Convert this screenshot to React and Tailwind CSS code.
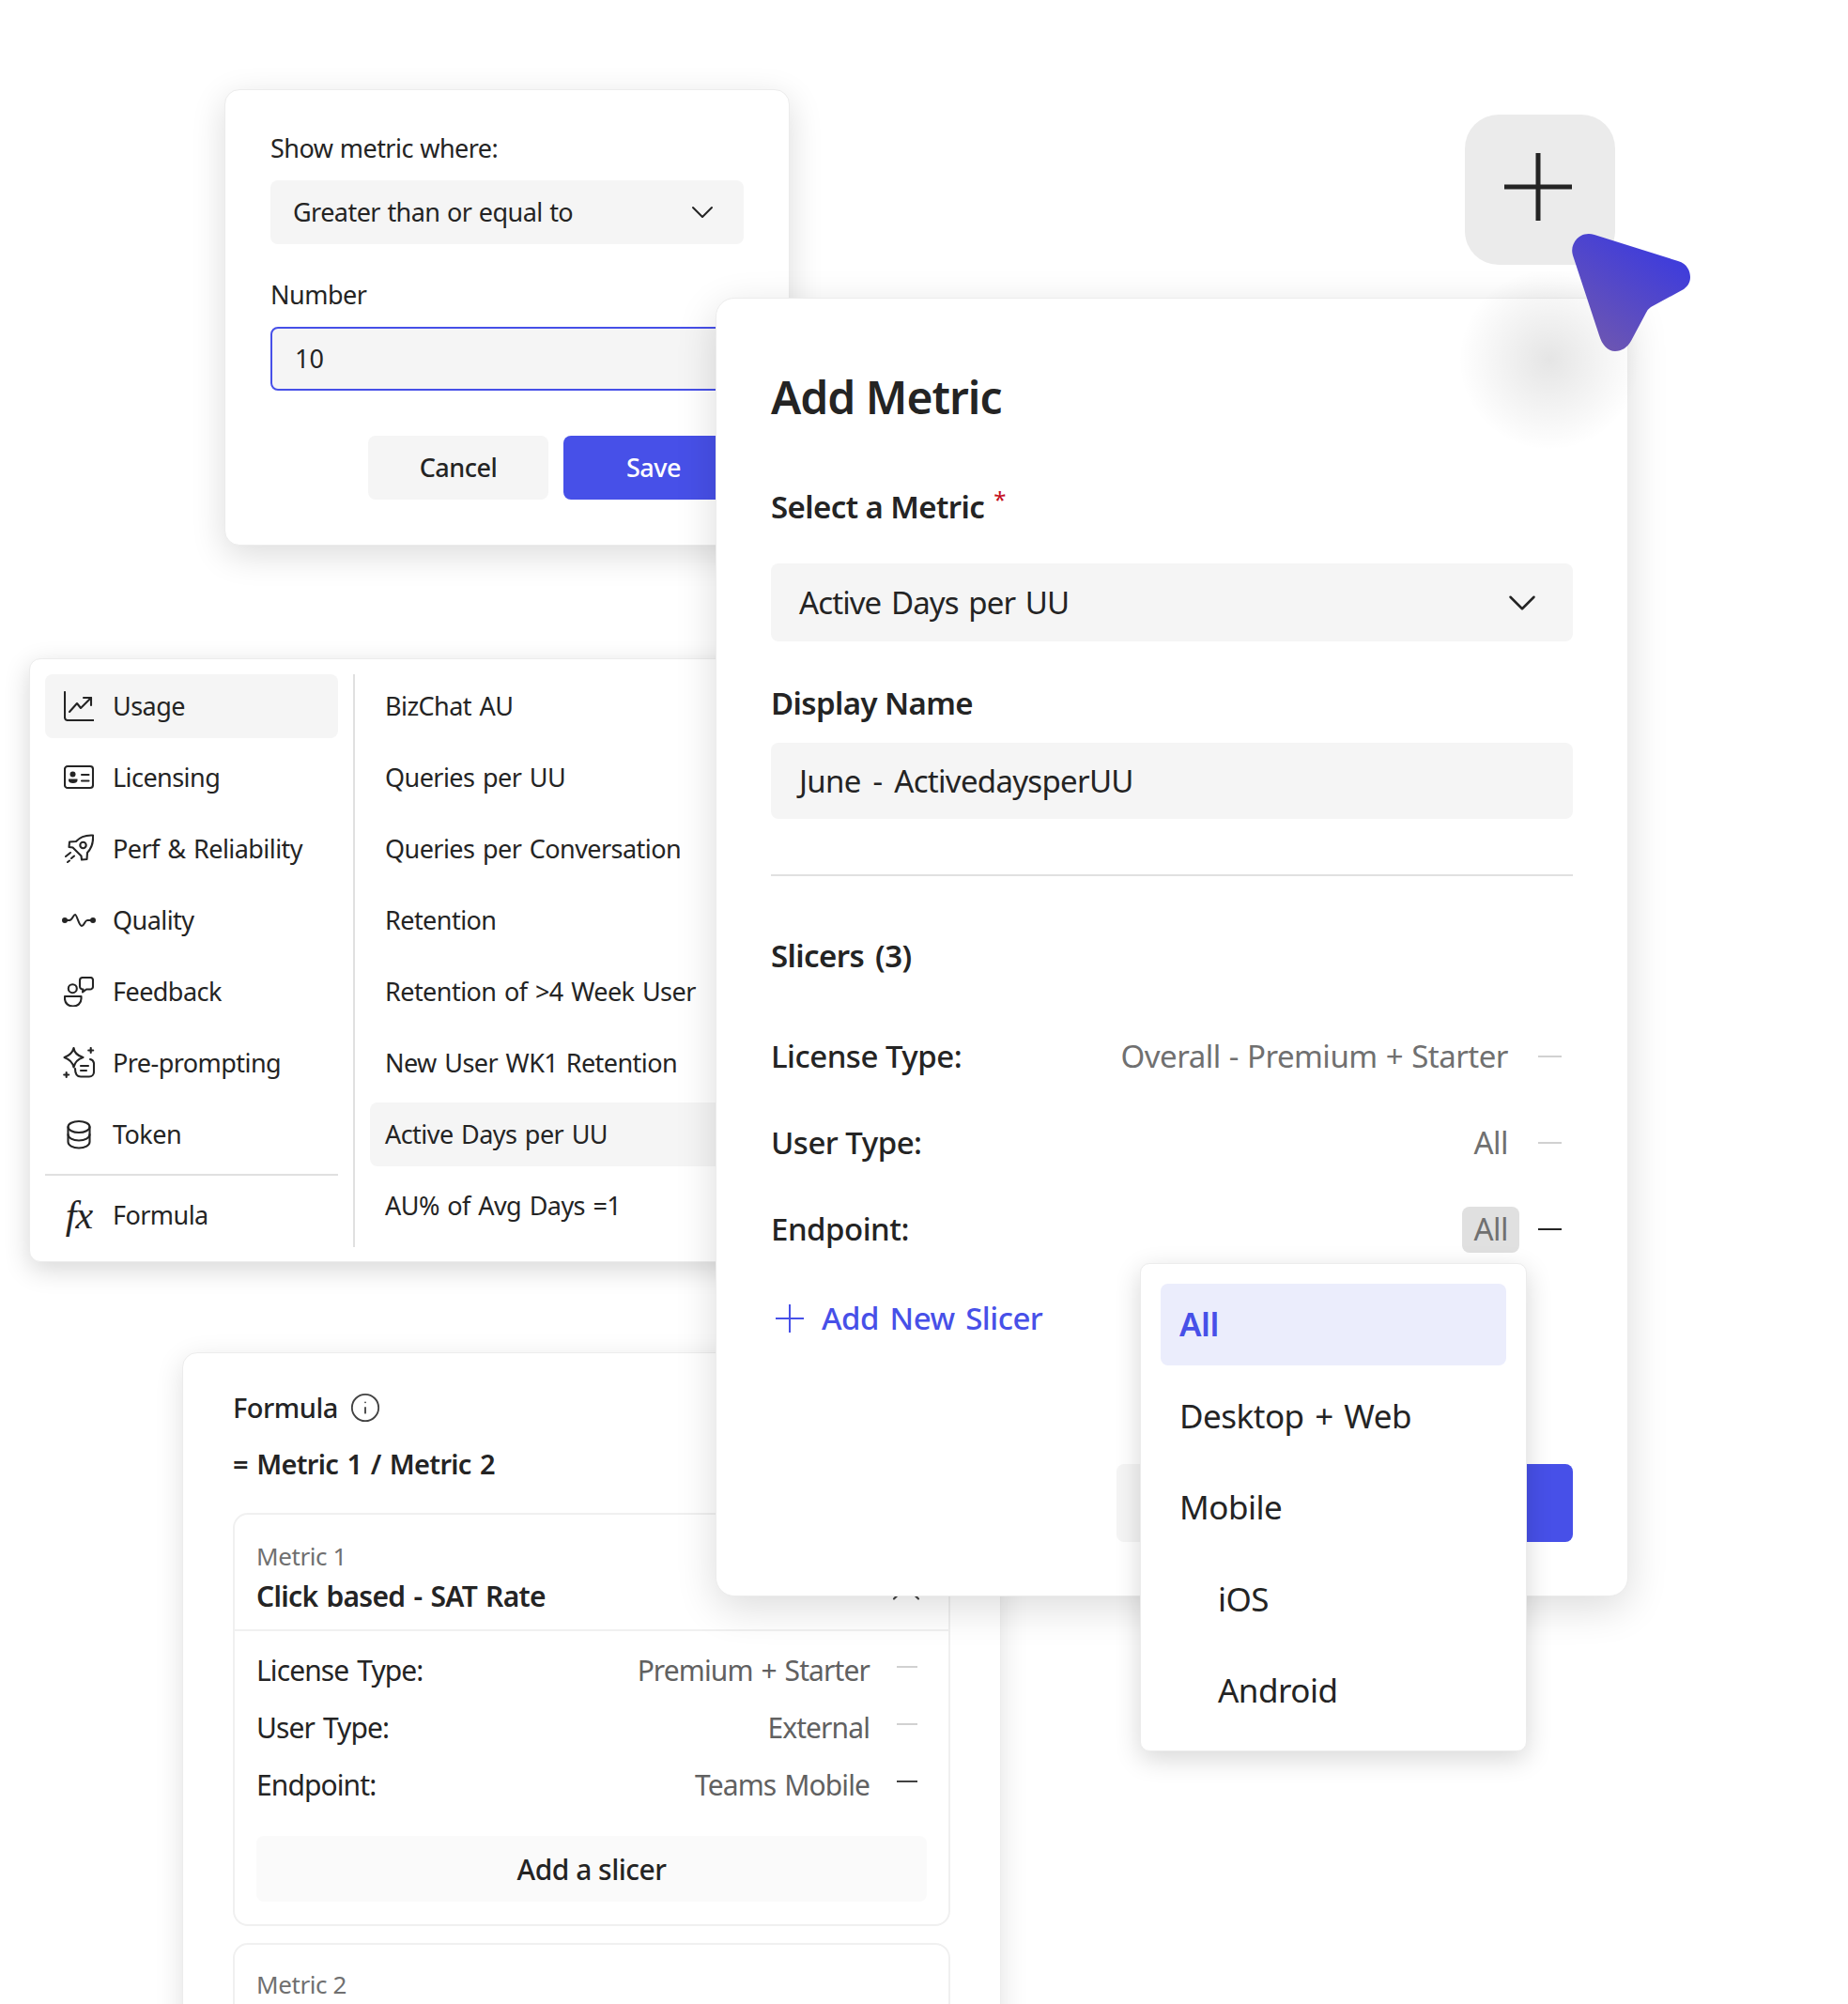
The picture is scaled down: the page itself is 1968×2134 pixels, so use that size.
import { ChevronDown, ChevronUp, Info } from 'lucide-react';

const font = "font-['Noto_Sans',sans-serif]";

const IconUsage = () => (
  <svg width="32" height="32" viewBox="0 0 32 32" fill="none" stroke="#242424" strokeWidth="2.1" strokeLinecap="round" strokeLinejoin="round">
    <path d="M1 1v27a3 3 0 0 0 3 3h28" />
    <path d="M6 22l8-9 4 5 11-11" />
    <path d="M21 7h8v8" />
  </svg>
);

const IconLicensing = () => (
  <svg width="32" height="32" viewBox="0 0 32 32" fill="none" stroke="#242424" strokeWidth="2.1" strokeLinecap="round">
    <rect x="1" y="4" width="30" height="23" rx="3" />
    <circle cx="9.5" cy="12.500" r="3" fill="#242424" stroke="none" />
    <path d="M5 17.500h9.500v1.500c0 2-2 3-4.750 3S5 21 5 19z" fill="#242424" stroke="none" />
    <path d="M19 13h7.500M19 19.500h7.500" />
  </svg>
);

const IconRocket = () => (
  <svg width="32" height="32" viewBox="0 0 32 32" fill="none" stroke="#242424" strokeWidth="2.1" strokeLinecap="round" strokeLinejoin="round">
    <path d="M31 1.500c-8-.5-14 2-18 6.500l-7 .5-.5 5.500 4 .5 9 9 .5 4 5.500-.5.5-7c4-4 6.500-10 6-18z" />
    <circle cx="20.500" cy="12" r="3.200" />
    <path d="M2 24l5-4M4 30l2-1.500M8 26l3-2.500" />
  </svg>
);

const IconQuality = () => (
  <svg width="36" height="32" viewBox="0 0 36 32" fill="none" stroke="#242424" strokeWidth="2" strokeLinecap="round" strokeLinejoin="round">
    <circle cx="3" cy="16" r="2" fill="#242424" />
    <circle cx="33" cy="16" r="2" fill="#242424" />
    <path d="M3 16h5c3 0 4-6 6-6s4 12 7 12 3-6 6-6h6" />
  </svg>
);

const IconFeedback = () => (
  <svg width="32" height="32" viewBox="0 0 32 32" fill="none" stroke="#242424" strokeWidth="2.1" strokeLinecap="round" strokeLinejoin="round">
    <circle cx="9.300" cy="12.700" r="4.500" />
    <path d="M1 21h17.500v2.500c0 5-4 8-8.750 8S1 28.500 1 23.500z" />
    <path d="M20 1h8.500a2.500 2.500 0 0 1 2.500 2.500v7a3 3 0 0 1-3 3h-4l-4 3 .5-3a3 3 0 0 1-3.500-3V4a3 3 0 0 1 3-3z" />
  </svg>
);

const IconPrePrompt = () => (
  <svg width="34" height="34" viewBox="0 0 34 34" fill="none" stroke="#242424" strokeWidth="2.1" strokeLinecap="round" strokeLinejoin="round">
    <path d="M11.500 1C12 5 15 9 21.500 11 15 13 12.500 17 11.500 21.500 10.500 17 7 13 1.500 11 7 9 10.500 5 11.500 1z" />
    <path d="M29.700 1v5M27.200 3.500h5M3.700 27v5M1.200 29.500h5" />
    <path d="M13 23c0 5 2 8.500 6 8.500h9a5 5 0 0 0 5-5V17a5 5 0 0 0-4-4" />
    <path d="M19 20h8M19 25h6" />
  </svg>
);

const IconToken = () => (
  <svg width="32" height="32" viewBox="0 0 32 32" fill="none" stroke="#242424" strokeWidth="2.1" strokeLinecap="round">
    <ellipse cx="16" cy="8" rx="11.500" ry="6" />
    <path d="M4.500 8v16c0 3.500 5 6.500 11.500 6.500s11.500-3 11.500-6.500V8" />
    <path d="M4.500 16c0 3.500 5 6.500 11.500 6.500s11.500-3 11.500-6.500" />
  </svg>
);

const IconFx = () => (
  <span className="font-['Liberation_Serif',serif] italic text-[42px] leading-none tracking-[-1px] text-[#242424]">fx</span>
);

const categories = [
  { label: 'Usage', icon: <IconUsage />, active: true },
  { label: 'Licensing', icon: <IconLicensing /> },
  { label: 'Perf & Reliability', icon: <IconRocket /> },
  { label: 'Quality', icon: <IconQuality /> },
  { label: 'Feedback', icon: <IconFeedback /> },
  { label: 'Pre-prompting', icon: <IconPrePrompt /> },
  { label: 'Token', icon: <IconToken /> },
];

const metrics = [
  'BizChat AU',
  'Queries per UU',
  'Queries per Conversation',
  'Retention',
  'Retention of >4 Week User',
  'New User WK1 Retention',
  'Active Days per UU',
  'AU% of Avg Days =1',
];

function CategoryRow({ label, icon, active }) {
  return (
    <div className={`h-[68px] rounded-lg flex items-center ${active ? 'bg-[#f5f5f5]' : ''}`}>
      <div className="w-[72px] flex justify-center shrink-0">{icon}</div>
      <span className="text-[27px] tracking-[-0.55px] [word-spacing:2px] text-[#242424]">{label}</span>
    </div>
  );
}

function ThresholdCard() {
  return (
    <div className="absolute left-[239px] top-[95px] w-[602px] h-[486px] bg-white rounded-[16px] border border-[#ececec] shadow-[0_10px_36px_rgba(0,0,0,0.14)] px-[48px] pt-[46px]">
      <div className="h-[32px] flex items-center text-[27px] tracking-[-0.55px] [word-spacing:1px] text-[#242424]">Show metric where:</div>
      <div className="mt-[18px] h-[68px] rounded-lg bg-[#f5f5f5] flex items-center justify-between px-[24px] text-[27px] tracking-[-0.55px] [word-spacing:1px] text-[#242424]">
        <span>Greater than or equal to</span>
        <ChevronDown size={40} strokeWidth={1.2} className="text-[#242424]" />
      </div>
      <div className="mt-[38px] h-[32px] flex items-center text-[27px] tracking-[-0.5px] text-[#242424]">Number</div>
      <div className="mt-[18px] h-[68px] rounded-lg bg-[#f5f5f5] border-2 border-[#4750e8] flex items-center px-[24px] text-[27px] text-[#242424]">10</div>
      <div className="mt-[48px] flex justify-end gap-[16px]">
        <div className="w-[192px] h-[68px] rounded-lg bg-[#f5f5f5] flex items-center justify-center text-[27px] tracking-[-0.5px] font-medium text-[#242424]">Cancel</div>
        <div className="w-[192px] h-[68px] rounded-lg bg-[#4750e8] flex items-center justify-center text-[27px] tracking-[-0.5px] font-medium text-white">Save</div>
      </div>
    </div>
  );
}

function MetricMenu() {
  return (
    <div className="absolute left-[31px] top-[701px] w-[800px] h-[643px] bg-white rounded-[12px] border border-[#ececec] shadow-[0_8px_28px_rgba(0,0,0,0.16)] flex pl-[16px] pt-[16px]">
      <div className="w-[312px] shrink-0">
        <div className="flex flex-col gap-[8px]">
          {categories.map((c) => (
            <CategoryRow key={c.label} {...c} />
          ))}
        </div>
        <div className="mt-[8px] h-[2px] bg-[#e0e0e0]" />
        <div className="mt-[8px]">
          <CategoryRow label="Formula" icon={<IconFx />} />
        </div>
      </div>
      <div className="ml-[16px] w-[2px] h-[610px] bg-[#e0e0e0] shrink-0" />
      <div className="ml-[16px] flex-1 flex flex-col gap-[8px]">
        {metrics.map((m) => (
          <div key={m} className={`h-[68px] rounded-lg flex items-center pl-[16px] text-[27px] tracking-[-0.55px] [word-spacing:2px] text-[#242424] ${m === 'Active Days per UU' ? 'bg-[#f5f5f5]' : ''}`}>
            {m}
          </div>
        ))}
      </div>
    </div>
  );
}

function FormulaSlicer({ label, value, dash }) {
  return (
    <div className="h-[40px] flex items-center justify-between text-[30px] tracking-[-0.9px] [word-spacing:2px]">
      <span className="text-[#242424]">{label}</span>
      <div className="flex items-center">
        <span className="text-[#616161]">{value}</span>
        <div className={`ml-[29px] mr-[10px] -mt-[6px] w-[22px] h-[2px] ${dash}`} />
      </div>
    </div>
  );
}

function FormulaCard() {
  return (
    <div className="absolute left-[194px] top-[1440px] w-[872px] h-[800px] bg-white rounded-[16px] border border-[#ececec] shadow-[0_8px_30px_rgba(0,0,0,0.12)] px-[53px] pt-[38px]">
      <div className="h-[40px] flex items-center gap-[12px] text-[29px] tracking-[-0.5px] font-medium text-[#242424]">
        <span>Formula</span>
        <Info size={34} strokeWidth={1.3} className="text-[#424242]" />
      </div>
      <div className="mt-[20px] h-[40px] flex items-center text-[29px] tracking-[-0.7px] [word-spacing:2.5px] font-semibold text-[#242424]">= Metric 1 / Metric 2</div>
      <div className="mt-[32px] w-[764px] rounded-[16px] border-2 border-[#f0f0f0] h-[440px]">
        <div className="relative h-[124px] border-b-2 border-[#f0f0f0] px-[23px] pt-[28px]">
          <div className="h-[32px] flex items-center text-[26px] tracking-[-0.4px] text-[#707070]">Metric 1</div>
          <div className="mt-[6px] h-[40px] flex items-center text-[30px] tracking-[-0.7px] [word-spacing:2px] font-semibold text-[#242424]">Click based - SAT Rate</div>
          <ChevronUp size={52} strokeWidth={1} className="absolute right-[19px] top-[57px] text-[#424242]" />
        </div>
        <div className="px-[23px] pt-[21px]">
          <div className="flex flex-col gap-[21px]">
            <FormulaSlicer label="License Type:" value="Premium + Starter" dash="bg-[#d1d1d1]" />
            <FormulaSlicer label="User Type:" value="External" dash="bg-[#d1d1d1]" />
            <FormulaSlicer label="Endpoint:" value="Teams Mobile" dash="bg-[#424242]" />
          </div>
          <div className="mt-[35px] h-[70px] rounded-lg bg-[#fafafa] flex items-center justify-center text-[30px] tracking-[-0.5px] font-medium text-[#242424]">Add a slicer</div>
        </div>
      </div>
      <div className="mt-[18px] w-[764px] rounded-[16px] border-2 border-[#f0f0f0] h-[300px] px-[23px] pt-[26px]">
        <div className="h-[32px] flex items-center text-[26px] tracking-[-0.4px] text-[#707070]">Metric 2</div>
      </div>
    </div>
  );
}

function SlicerRow({ label, children, dash }) {
  return (
    <div className="h-[48px] flex items-center justify-between">
      <span className="text-[33px] tracking-[-0.5px] font-medium text-[#242424]">{label}</span>
      <div className="flex items-center">
        {children}
        <div className={`ml-[32px] mr-[12px] w-[25px] h-[2px] ${dash}`} />
      </div>
    </div>
  );
}

function AddMetricPanel() {
  return (
    <div className="absolute left-[762px] top-[317px] w-[972px] h-[1383px] bg-white rounded-[20px] border border-[#ececec] shadow-[0_12px_44px_rgba(0,0,0,0.14)] px-[58px] pt-[75px]">
      <div className="h-[60px] flex items-center text-[48px] tracking-[-1px] font-semibold text-[#242424]">Add Metric</div>
      <div className="mt-[67px] h-[40px] flex items-center text-[33px] tracking-[-0.6px] font-semibold text-[#242424]">
        <span>Select a Metric</span>
        <span className="ml-[10px] self-start text-[24px] leading-[24px] font-normal text-[#c50f1f]">*</span>
      </div>
      <div className="mt-[40px] h-[83px] rounded-lg bg-[#f5f5f5] flex items-center justify-between pl-[30px] pr-[29px] text-[33px] tracking-[-0.9px] [word-spacing:3px] text-[#242424]">
        <span>Active Days per UU</span>
        <ChevronDown size={50} strokeWidth={1.2} className="text-[#242424]" />
      </div>
      <div className="mt-[46px] h-[40px] flex items-center text-[33px] tracking-[-0.6px] font-semibold text-[#242424]">Display Name</div>
      <div className="mt-[22px] h-[81px] rounded-lg bg-[#f5f5f5] flex items-center pl-[30px] text-[33px] tracking-[-0.7px] [word-spacing:5px] text-[#242424]">June - ActivedaysperUU</div>
      <div className="mt-[59px] h-[2px] bg-[#e0e0e0]" />
      <div className="mt-[65px] h-[40px] flex items-center gap-[12px] text-[33px] tracking-[-0.6px] font-semibold text-[#242424]">
        <span>Slicers</span>
        <span>(3)</span>
      </div>
      <div className="mt-[63px] flex flex-col gap-[44px]">
        <SlicerRow label="License Type:" dash="bg-[#d1d1d1]">
          <span className="text-[33px] tracking-[-0.5px] [word-spacing:1px] text-[#707070]">Overall - Premium + Starter</span>
        </SlicerRow>
        <SlicerRow label="User Type:" dash="bg-[#d1d1d1]">
          <span className="text-[33px] tracking-[-0.5px] text-[#707070]">All</span>
        </SlicerRow>
        <SlicerRow label="Endpoint:" dash="bg-[#242424]">
          <span className="-mr-[12px] px-[12px] h-[49px] flex items-center rounded-lg bg-[#e0e0e0] text-[33px] tracking-[-0.5px] text-[#707070]">All</span>
        </SlicerRow>
      </div>
      <div className="mt-[51px] h-[40px] flex items-center text-[33px] tracking-[-0.5px] [word-spacing:3.5px] font-medium text-[#4750e8]">
        <svg width="32" height="32" viewBox="0 0 32 32" className="ml-[4px] mr-[18px]" stroke="#4750e8" strokeWidth="2">
          <path d="M16 1v30M1 16h30" />
        </svg>
        <span>Add New Slicer</span>
      </div>
      <div className="mt-[135px] flex justify-end gap-[20px]">
        <div className="w-[234px] h-[83px] rounded-lg bg-[#f5f5f5]" />
        <div className="w-[232px] h-[83px] rounded-lg bg-[#4750e8]" />
      </div>
    </div>
  );
}

function EndpointDropdown() {
  const options = [
    { label: 'All', selected: true },
    { label: 'Desktop + Web' },
    { label: 'Mobile' },
    { label: 'iOS', nested: true },
    { label: 'Android', nested: true },
  ];
  return (
    <div className="absolute left-[1214px] top-[1345px] w-[412px] h-[520px] bg-white rounded-[10px] border border-[#ececec] shadow-[0_8px_28px_rgba(0,0,0,0.16)] px-[21px] pt-[21px] flex flex-col gap-[10.5px]">
      {options.map((o) => (
        <div
          key={o.label}
          className={`h-[87px] shrink-0 rounded-lg flex items-center text-[35px] tracking-[-0.5px] [word-spacing:3px] ${o.nested ? 'pl-[61px]' : 'pl-[20px]'} ${o.selected ? 'bg-[#ebedfc] text-[#4750e8] font-semibold' : 'text-[#242424]'}`}
        >
          {o.label}
        </div>
      ))}
    </div>
  );
}

function AddTile() {
  return (
    <div className="absolute left-[1560px] top-[122px] w-[160px] h-[160px] rounded-[36px] bg-[#ebebeb] flex items-center justify-center">
      <svg width="72" height="72" viewBox="0 0 72 72" className="-mt-[6px] -ml-[5px]" stroke="#242424" strokeWidth="5">
        <path d="M36 0v72M0 36h72" />
      </svg>
    </div>
  );
}

function Cursor() {
  return (
    <svg className="absolute left-[1660px] top-[240px]" width="150" height="140" viewBox="0 0 150 140" fill="url(#cursorFill)">
      <defs>
        <linearGradient id="cursorFill" x1="1" y1="0" x2="0.35" y2="1">
          <stop offset="0" stopColor="#3336e6" />
          <stop offset="1" stopColor="#6b55b3" />
        </linearGradient>
      </defs>
      <path d="M38 10 L127 38 C137 41 140 49 140 55 C140 61 137 65 133 68 L98 87 Q95 89 93 93 L77 123 C73 130 67 134 60 134 C52 134 46 127 43 117 L15 32 C11 20 22 5 38 10 Z" />
    </svg>
  );
}

export default function App() {
  return (
    <div className={`relative w-[1968px] h-[2134px] overflow-hidden bg-white ${font}`}>
      <AddTile />
      <ThresholdCard />
      <MetricMenu />
      <FormulaCard />
      <AddMetricPanel />
      <div className="absolute left-[1555px] top-[288px] w-[190px] h-[190px] rounded-full bg-[radial-gradient(circle,rgba(0,0,0,0.1)_0%,rgba(0,0,0,0.03)_50%,transparent_72%)]" />
      <EndpointDropdown />
      <Cursor />
    </div>
  );
}
